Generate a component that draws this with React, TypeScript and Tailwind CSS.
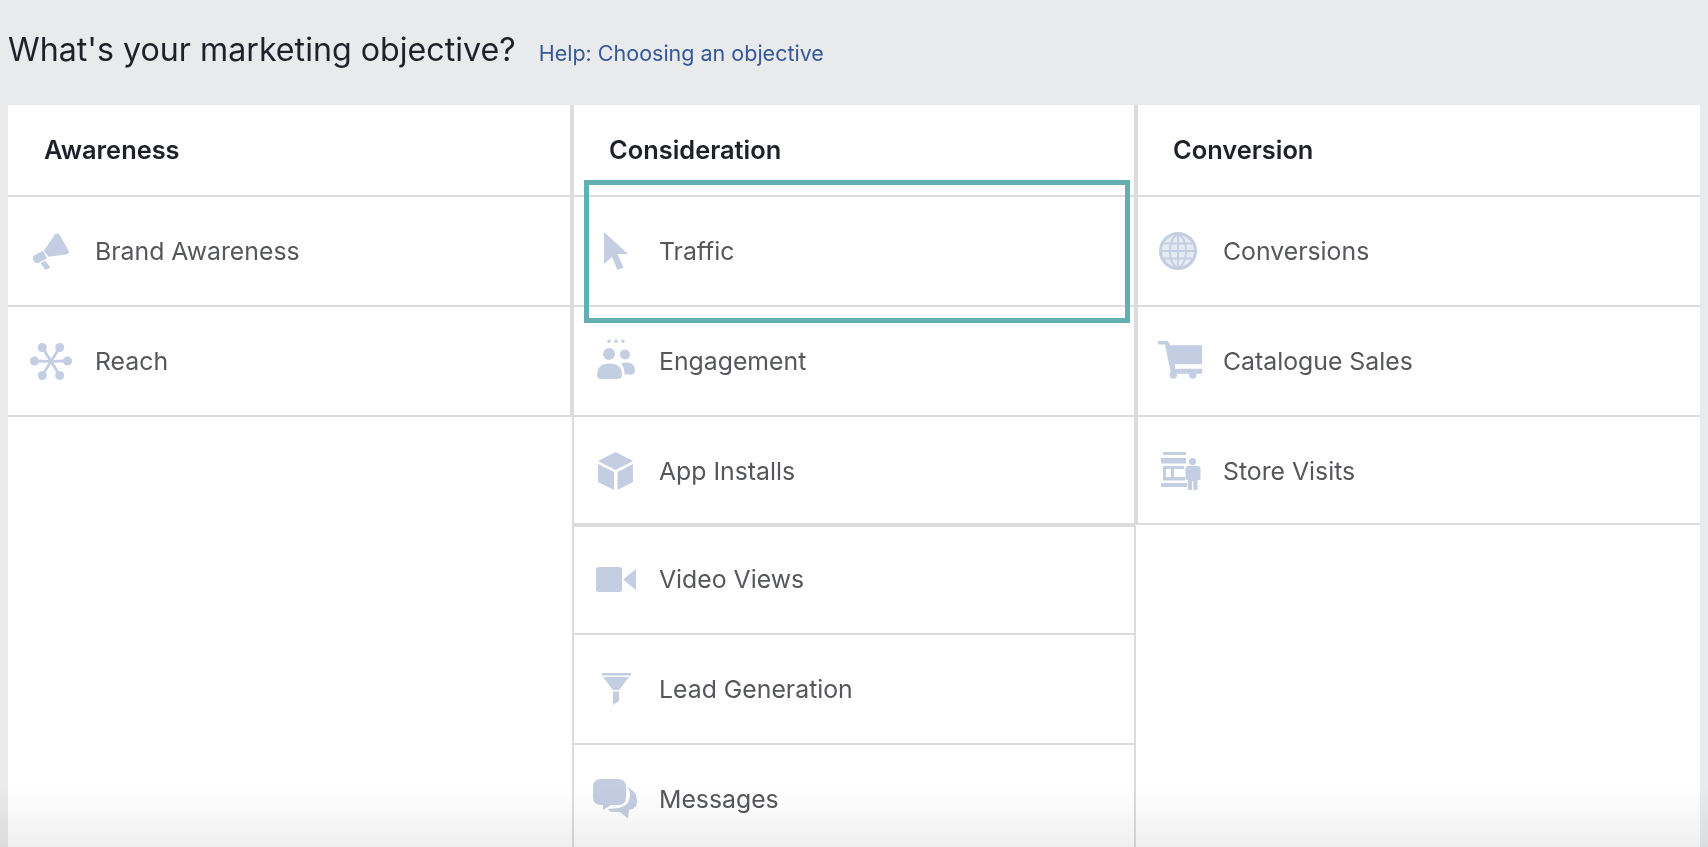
import React from "react";

const C = "#c4cee2";

function Megaphone({ className }: { className?: string }) {
  return (
    <svg viewBox="0 0 36 37" fill={C} className={className}>
      <path d="M10.7 18 L21.7 1.7 Q24 -0.8 26.3 1.5 L35.5 17.5 Q36.700 20.500 34 21.200 L15.700 23.700 Z" />
      <path d="M0.7 22.700 L10 17.700 L14 25.300 L4.700 30.300 Q1 30 0 26.500 Q-0.300 24 0.700 22.700Z" />
      <path d="M7.500 30 L12 28 L17.500 34.500 L12.500 37 Z" />
    </svg>
  );
}
function ReachIcon({ className }: { className?: string }) {
  const pts = [[4.500, 18], [37.500, 18], [12.300, 4.500], [29.700, 4.500], [12.300, 32.500], [29.700, 32.500]];
  return (
    <svg viewBox="0 0 42 37" fill={C} className={className}>
      {pts.map(([x, y], i) => (
        <g key={i}>
          <line x1="21" y1="18.300" x2={x} y2={y} stroke={C} strokeWidth="2.800" />
          <circle cx={x} cy={y} r="4.500" />
        </g>
      ))}
    </svg>
  );
}
function Cursor({ className }: { className?: string }) {
  return (
    <svg viewBox="0 0 24 38" fill={C} className={className}>
      <path d="M0 0 L0 32 L8 25 L13.500 38 L19.500 35.500 L13.500 22 L24 22 Z" />
    </svg>
  );
}
function People({ className }: { className?: string }) {
  return (
    <svg viewBox="0 0 38 40" fill={C} className={className}>
      <circle cx="12" cy="2.300" r="1.700" />
      <circle cx="19" cy="2.300" r="1.700" />
      <circle cx="26" cy="2.300" r="1.700" />
      <circle cx="12" cy="15" r="6" />
      <circle cx="28" cy="15.500" r="5" />
      <path d="M0 36 Q0 24.500 12.500 24.500 Q25 24.500 25 36 Q25 40 21 40 L4 40 Q0 40 0 36Z" />
      <path d="M24 24.500 Q27 23.500 30 23.500 Q38 23.500 38 32 Q38 35.500 34 35.500 L27.500 35.500 Q27.500 28 24 24.500Z" />
    </svg>
  );
}
function Box({ className }: { className?: string }) {
  return (
    <svg viewBox="0 0 35 38" fill={C} className={className}>
      <path d="M17.500 0 L35 9 L17.500 18 L0 9 Z" />
      <path d="M0 12 L16 20 L16 38 L0 30 Z" />
      <path d="M19.500 20 L35 12 L35 30 L19.500 38 Z" />
    </svg>
  );
}
function Video({ className }: { className?: string }) {
  return (
    <svg viewBox="0 0 40 25" fill={C} className={className}>
      <rect x="0" y="0" width="26" height="25" rx="2.500" />
      <path d="M27 12.500 L40 2 L40 23 Z" />
    </svg>
  );
}
function Funnel({ className }: { className?: string }) {
  return (
    <svg viewBox="0 0 29 32" fill={C} className={className}>
      <rect x="0" y="0" width="29" height="2.500" />
      <path d="M1 4 L27 4 L17 17 L11 17 Z" />
      <path d="M11 18.500 L17 18.500 L17 28 L11 32 Z" />
    </svg>
  );
}
function Chat({ className }: { className?: string }) {
  return (
    <svg viewBox="0 0 44 40" fill={C} className={className}>
      <path d="M8 0 L25 0 Q33 0 33 8 L33 18 Q33 26 25 26 L18 26 L10 31 L10 26 L8 26 Q0 26 0 18 L0 8 Q0 0 8 0Z" />
      <path d="M34 8 Q44 12 44 22 Q44 30 36 31 L35 39.500 L27 33 L21 33 Q16 33 15 30 L26 29 Q37 27 37 16 Q37 11 34 8Z" />
    </svg>
  );
}
function Globe({ className }: { className?: string }) {
  return (
    <svg viewBox="0 0 38 38" fill="none" className={className}>
      <circle cx="19" cy="19" r="17.500" fill="#e6eaf2" stroke={C} strokeWidth="3" />
      <g stroke={C} strokeWidth="1.800">
        <path d="M5 11.500 H33 M3 19 H35 M5 26.500 H33 M19 3 V35" />
        <ellipse cx="19" cy="19" rx="8" ry="16" />
      </g>
    </svg>
  );
}
function Cart({ className }: { className?: string }) {
  return (
    <svg viewBox="0 0 44 38" fill={C} className={className}>
      <path d="M0 0 L10 0 L12 4.300 L44 4.300 L44 23.300 L17 23.300 L17 27.700 L44 27.700 L44 32.700 L13 32.700 L7 3.500 L0 3.500 Z" />
      <circle cx="15.300" cy="34" r="3.700" />
      <circle cx="34.700" cy="34" r="3.700" />
    </svg>
  );
}
function Store({ className }: { className?: string }) {
  return (
    <svg viewBox="0 0 40 38" fill={C} className={className}>
      <rect x="2" y="0" width="23" height="3" />
      <rect x="0" y="6" width="25" height="5.500" />
      <path d="M2 14 L23 14 L23 17 L13 17 L13 25 L24 25 L24 28.500 L2 28.500 Z M5 17 L5 25 L10 25 L10 17 Z" fillRule="evenodd" />
      <rect x="0" y="31" width="26" height="4" />
      <circle cx="31.500" cy="9.500" r="3.500" />
      <path d="M27 14 L36 14 Q39.500 14 39.500 17 L39.500 28 L36.500 28 L36.500 38 L32.300 38 L32.300 29 L31 29 L31 38 L26.800 38 L26.800 28 L24.500 28 L24.500 16 Q24.500 14 27 14 Z" />
    </svg>
  );
}

type Item = { label: string; icon: React.ReactNode };

function Row({ item, cls, cell }: { item: Item; cls: string; cell: string }) {
  return (
    <div className={cls}>
      <div className={cell}>{item.icon}</div>
      <span className="text-[24.8px] leading-[32px] text-[#55575b]">{item.label}</span>
    </div>
  );
}

function Header({ title, cls }: { title: string; cls: string }) {
  return (
    <div className={cls}>
      <h2 className="text-[25.4px] leading-[32px] font-semibold text-[#1d2129]">{title}</h2>
    </div>
  );
}

export default function App() {
  return (
    <div className="relative h-[847px] overflow-hidden bg-[#e9eaec] font-['Inter',sans-serif]">
      <header className="flex h-[105px] items-baseline gap-[23px] pl-[8px] pt-[29px]">
        <h1 className="text-[32.2px] leading-[42px] font-normal text-[#1d2129]">What's your marketing objective?</h1>
        <a className="text-[21.5px] text-[#365899]">Help: Choosing an objective</a>
      </header>

      <main className="mx-[8px] flex h-[742px] bg-white">
        <section className="w-[564px] shrink-0">
          <Header title="Awareness" cls="flex h-[92px] items-center border-r-2 border-b-2 border-[#dcdcdd] pl-[36px]" />
          <Row
            cell="w-[87px] shrink-0"
            cls="flex h-[110px] items-center border-r-2 border-b-2 border-[#dcdcdd]"
            item={{ label: "Brand Awareness", icon: <Megaphone className="ml-[25px] h-[37px] w-[36px]" /> }}
          />
          <Row
            cell="w-[87px] shrink-0"
            cls="flex h-[110px] items-center border-r-2 border-b-2 border-[#dcdcdd]"
            item={{ label: "Reach", icon: <ReachIcon className="ml-[22px] h-[37px] w-[42px]" /> }}
          />
        </section>

        <section className="w-[564px] shrink-0 border-x-2 border-[#dcdcdd]">
          <Header title="Consideration" cls="flex h-[92px] items-center border-b-2 border-[#dcdcdd] pl-[35px]" />
          <Row
            cell="w-[85px] shrink-0"
            cls="flex h-[110px] items-center border-b-2 border-[#dcdcdd]"
            item={{ label: "Traffic", icon: <Cursor className="ml-[30px] h-[38px] w-[24px]" /> }}
          />
          <Row
            cell="w-[85px] shrink-0"
            cls="flex h-[110px] items-center border-b-2 border-[#dcdcdd]"
            item={{ label: "Engagement", icon: <People className="ml-[23px] -mt-[4px] h-[40px] w-[38px]" /> }}
          />
          <Row
            cell="w-[85px] shrink-0"
            cls="flex h-[108px] items-center border-b-2 border-[#dcdcdd] pt-[1px]"
            item={{ label: "App Installs", icon: <Box className="ml-[24px] h-[38px] w-[35px]" /> }}
          />
          <Row
            cell="w-[85px] shrink-0"
            cls="flex h-[110px] items-center border-y-2 border-[#dcdcdd] pb-[2px]"
            item={{ label: "Video Views", icon: <Video className="ml-[22px] h-[25px] w-[40px]" /> }}
          />
          <Row
            cell="w-[85px] shrink-0"
            cls="flex h-[110px] items-center border-b-2 border-[#dcdcdd]"
            item={{ label: "Lead Generation", icon: <Funnel className="ml-[28px] h-[32px] w-[29px]" /> }}
          />
          <Row
            cell="w-[85px] shrink-0"
            cls="flex h-[108px] items-center"
            item={{ label: "Messages", icon: <Chat className="ml-[19px] h-[40px] w-[44px]" /> }}
          />
        </section>

        <section className="min-w-0 flex-1">
          <Header title="Conversion" cls="flex h-[92px] items-center border-l-2 border-b-2 border-[#dcdcdd] pl-[35px]" />
          <Row
            cell="w-[85px] shrink-0"
            cls="flex h-[110px] items-center border-l-2 border-b-2 border-[#dcdcdd]"
            item={{ label: "Conversions", icon: <Globe className="ml-[21px] h-[38px] w-[38px]" /> }}
          />
          <Row
            cell="w-[85px] shrink-0"
            cls="flex h-[110px] items-center border-l-2 border-b-2 border-[#dcdcdd]"
            item={{ label: "Catalogue Sales", icon: <Cart className="ml-[20px] -mt-[3px] h-[38px] w-[44px]" /> }}
          />
          <Row
            cell="w-[85px] shrink-0"
            cls="flex h-[108px] items-center border-l-2 border-b-2 border-[#dcdcdd] pt-[1px]"
            item={{ label: "Store Visits", icon: <Store className="ml-[23px] h-[38px] w-[40px]" /> }}
          />
        </section>
      </main>

      <div className="pointer-events-none absolute left-[584px] top-[180px] h-[143px] w-[546px] border-[5px] border-[#63aeb1]" />
      <div className="pointer-events-none absolute inset-x-0 bottom-0 h-[60px] bg-gradient-to-b from-white to-[#f0f0f0] mix-blend-multiply" />
    </div>
  );
}
